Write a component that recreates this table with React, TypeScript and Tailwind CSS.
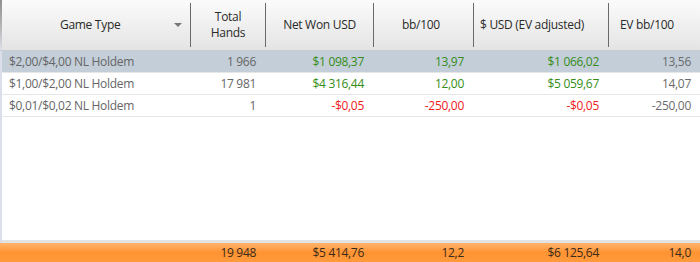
const cols = [
  { key: 'game', width: 'w-[190px]' },
  { key: 'hands', width: 'w-[75px]' },
  { key: 'net', width: 'w-[108px]' },
  { key: 'bb', width: 'w-[100px]' },
  { key: 'ev', width: 'w-[135px]' },
  { key: 'evbb', width: 'flex-1' },
]

type Tone = 'green' | 'red' | 'gray'

const rows: { game: string; hands: string; cells: [string, Tone][]; selected?: boolean }[] = [
  {
    game: '$2,00/$4,00 NL Holdem',
    hands: '1 966',
    selected: true,
    cells: [
      ['$1 098,37', 'green'],
      ['13,97', 'green'],
      ['$1 066,02', 'green'],
      ['13,56', 'gray'],
    ],
  },
  {
    game: '$1,00/$2,00 NL Holdem',
    hands: '17 981',
    cells: [
      ['$4 316,44', 'green'],
      ['12,00', 'green'],
      ['$5 059,67', 'green'],
      ['14,07', 'gray'],
    ],
  },
  {
    game: '$0,01/$0,02 NL Holdem',
    hands: '1',
    cells: [
      ['-$0,05', 'red'],
      ['-250,00', 'red'],
      ['-$0,05', 'red'],
      ['-250,00', 'gray'],
    ],
  },
]

const toneClass: Record<Tone, string> = {
  green: 'text-[#348d17]',
  red: 'text-[#f0201c]',
  gray: 'text-[#6b6b6b]',
}

const totals = ['19 948', '$5 414,76', '12,2', '$6 125,64', '14,0']

function Sep() {
  return <div className="w-px self-stretch my-[3px] bg-[#6a6a6a]" />
}

export default function App() {
  return (
    <div
      className="w-[700px] h-[262px] flex flex-col bg-white text-[12px] tracking-[-0.3px] border-l-2 border-[#dcdfea]"
      style={{ fontFamily: '"Open Sans", "Liberation Sans", sans-serif' }}
    >
      {/* header */}
      <div className="h-[51px] -ml-[2px] flex bg-gradient-to-b from-[#fbfbfb] to-[#e4e4e4] border-b border-[#c9cdd3] text-[#2a2a2a]">
        <div className="w-[2px] bg-gradient-to-b from-[#8f8f8f] via-[#b4b4b4] to-[#dcdfea]" />
        <div className="w-[188px] flex items-center relative">
          <span className="ml-[58px]">Game Type</span>
          <span className="absolute left-[172px] top-[23px] w-0 h-0 border-l-[4px] border-r-[4px] border-t-[4px] border-l-transparent border-r-transparent border-t-[#777]" />
        </div>
        <Sep />
        <div className="w-[74px] flex flex-col justify-center items-center leading-[16px]">
          <span>Total</span>
          <span>Hands</span>
        </div>
        <Sep />
        <div className="w-[107px] flex items-center justify-center">Net Won USD</div>
        <Sep />
        <div className="w-[99px] flex items-center pl-[28px]">bb/100</div>
        <Sep />
        <div className="w-[134px] flex items-center pl-[6px]">$ USD (EV adjusted)</div>
        <Sep />
        <div className="flex-1 flex items-center pl-[11px]">EV bb/100</div>
      </div>

      {/* rows */}
      <div className="flex-1 flex flex-col">
        {rows.map((r, i) => (
          <div
            key={i}
            className={`h-[22px] flex items-center pt-px border-b border-[#e6e6e6] ${r.selected ? 'bg-[#c3ced9]' : ''}`}
          >
            <div className={`${cols[0].width} -ml-[2px] pl-[9px] text-[#666]`}>{r.game}</div>
            <div className={`${cols[1].width} text-right pr-[9px] text-[#666]`}>{r.hands}</div>
            {r.cells.map(([v, t], j) => (
              <div key={j} className={`${cols[j + 2].width} text-right pr-[9px] ${toneClass[t]}`}>
                {v}
              </div>
            ))}
          </div>
        ))}
      </div>

      {/* totals */}
      <div className="h-[3px] bg-[#e3e3e3]" />
      <div className="h-[19px] flex items-center -ml-[2px] bg-gradient-to-b from-[#ffb46a] via-[#ff9331] to-[#ff9a3c] text-[#3a2a1a]">
        <div className="w-[190px]" />
        {totals.map((v, j) => (
          <div key={j} className={`${cols[j + 1].width} text-right pr-[9px]`}>
            {v}
          </div>
        ))}
      </div>
    </div>
  )
}
